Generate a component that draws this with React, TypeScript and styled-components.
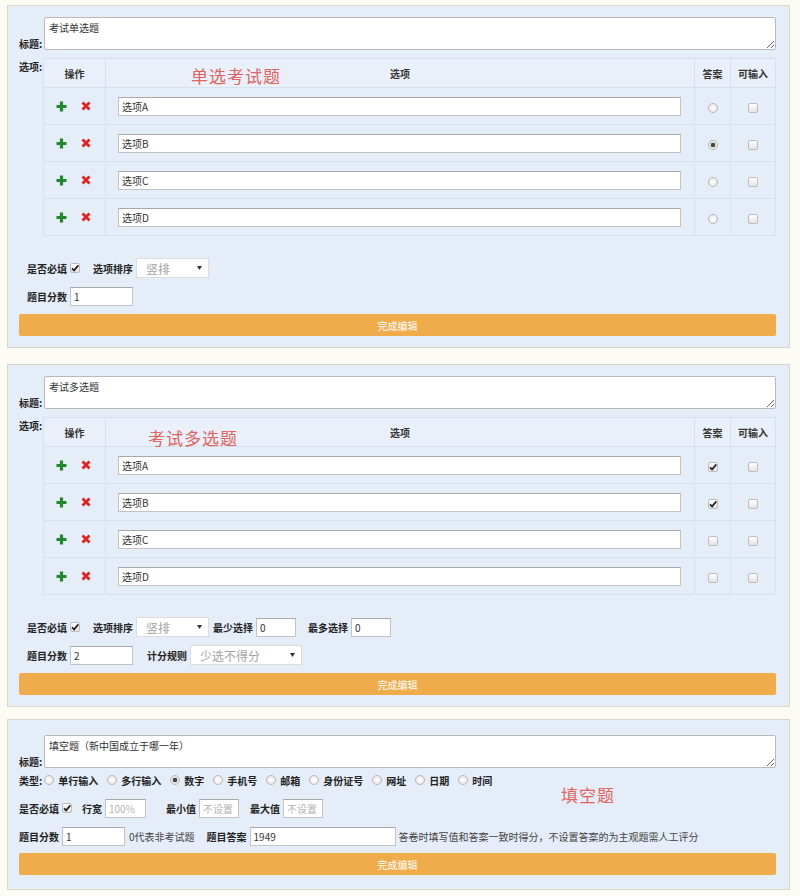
import React from 'react';
import styled, {createGlobalStyle} from 'styled-components';

const GlobalStyle = createGlobalStyle`
    body {
        margin: 0;
        background: #fcfcf4;
        font-family: "Noto Sans CJK SC", "Liberation Sans", sans-serif;
        font-size: 10px;
        color: #333;
    }
`;

const Page = styled.div`
    display: flex;
    flex-direction: column;
    padding: 5px 0 6px 7px;
`;

const Panel = styled.section<{ $mt?: number; $pt?: number; $pb?: number }>`
    position: relative;
    box-sizing: border-box;
    width: 783px;
    margin-top: ${p => p.$mt ?? 0}px;
    padding: ${p => p.$pt ?? 11}px 13px ${p => p.$pb ?? 11}px 11px;
    border: 1px solid #d6dac4;
    background: #e4edf8;
`;

const Note = styled.div<{ $left: number; $top: number }>`
    position: absolute;
    left: ${p => p.$left}px;
    top: ${p => p.$top}px;
    font-size: 17px;
    line-height: 20px;
    letter-spacing: 1px;
    color: #e4625f;
    pointer-events: none;
`;

const TitleRow = styled.div`
    display: flex;
    align-items: flex-end;
`;

const SideLabel = styled.label<{ $w: number; $pt?: number }>`
    width: ${p => p.$w}px;
    flex-shrink: 0;
    padding-top: ${p => p.$pt ?? 0}px;
    font-weight: bold;
    color: #222;
    line-height: 12px;
`;

const TitleArea = styled.textarea`
    flex: 1;
    box-sizing: border-box;
    height: 33px;
    padding: 2px 4px;
    border: 1px solid #b9b9b9;
    border-radius: 2px;
    background: #fff;
    font: inherit;
    color: #333;
`;

const OptionsRow = styled.div`
    display: flex;
    align-items: flex-start;
    margin-top: 8px;
`;

const Table = styled.table`
    flex: 1;
    border-collapse: collapse;
    table-layout: fixed;
`;

const Th = styled.th<{ $w?: number }>`
    width: ${p => (p.$w ? `${p.$w}px` : 'auto')};
    height: 28px;
    padding: 0;
    border: 1px solid #d6e1ee;
    background: #e9f0f9;
    font-weight: bold;
    color: #333;
    text-align: center;
`;

const Td = styled.td<{ $pad?: string }>`
    height: 36px;
    padding: ${p => p.$pad ?? '0'};
    border: 1px solid #d6e1ee;
    text-align: center;
    vertical-align: middle;
`;

const Ops = styled.div`
    display: flex;
    justify-content: center;
    gap: 14px;
    padding-right: 2px;
`;

const TextInput = styled.input<{ $w?: number }>`
    box-sizing: border-box;
    width: ${p => (p.$w ? `${p.$w}px` : '100%')};
    height: 19px;
    padding: 0 3px;
    border: 1px solid #c3c3c3;
    border-top-color: #a9a9a9;
    background: #fff;
    font: inherit;
    color: #333;

    &::placeholder {
        color: #b3b3b3;
    }
`;

const Radio = styled.input.attrs({type: 'radio'})`
    appearance: none;
    width: 10px;
    height: 10px;
    margin: 0;
    border: 1px solid #b8b8b8;
    border-radius: 50%;
    background: radial-gradient(circle, #fff 0, #e2e2e2 100%);
    vertical-align: middle;

    &:checked {
        background: radial-gradient(circle, #444 0 2px, #e8e8e8 2.6px);
    }
`;

const Check = styled.input.attrs({type: 'checkbox'})`
    appearance: none;
    width: 10px;
    height: 10px;
    margin: 0;
    border: 1px solid #bdbdbd;
    border-radius: 2px;
    background: linear-gradient(#fff, #e4e4e4);
    vertical-align: middle;

    &:checked {
        background: url("data:image/svg+xml;utf8,<svg xmlns='http://www.w3.org/2000/svg' viewBox='0 0 10 10'><path d='M2 5.3 L4.1 7.4 L8.3 2.4' fill='none' stroke='%23222' stroke-width='1.7'/></svg>") center / 10px 10px no-repeat,
            linear-gradient(#fff, #e4e4e4);
    }
`;

const Controls = styled.div<{ $ml: number; $mt: number }>`
    display: flex;
    flex-direction: column;
    gap: 8px;
    margin: ${p => p.$mt}px 0 0 ${p => p.$ml}px;
`;

const ControlRow = styled.div<{ $h?: number }>`
    display: flex;
    align-items: center;
    height: ${p => p.$h ?? 20}px;
`;

const Field = styled.span<{ $ml?: number; $gap?: number }>`
    display: inline-flex;
    align-items: center;
    gap: ${p => p.$gap ?? 3}px;
    margin-left: ${p => p.$ml ?? 0}px;
`;

const Bold = styled.span`
    font-weight: bold;
    color: #222;
    white-space: nowrap;
`;

const Plain = styled.span<{ $ml?: number }>`
    margin-left: ${p => p.$ml ?? 0}px;
    color: #444;
    white-space: nowrap;
`;

const Select = styled.select<{ $w: number }>`
    appearance: none;
    box-sizing: border-box;
    width: ${p => p.$w}px;
    height: 20px;
    padding: 0 0 0 9px;
    border: 1px solid #dcdcdc;
    background: #fff url("data:image/svg+xml;utf8,<svg xmlns='http://www.w3.org/2000/svg' viewBox='0 0 5 4'><path d='M0 0 L5 0 L2.5 4z' fill='%23333'/></svg>") right 6px center / 5px 4px no-repeat;
    font-family: inherit;
    font-size: 12px;
    color: #a3a3a3;
`;

const DoneButton = styled.button<{ $mt: number }>`
    display: block;
    width: 100%;
    height: 22px;
    margin-top: ${p => p.$mt}px;
    border: none;
    border-radius: 2px;
    background: #f0ac4b;
    color: #fff;
    font: inherit;
`;

const Plus = () => (
    <svg width="11" height="11" viewBox="0 0 11 11">
        <path d="M5.5 0.5 V10.5 M0.5 5.5 H10.5" stroke="#208a2a" strokeWidth="3.2"/>
    </svg>
);

const Cross = () => (
    <svg width="10" height="10" viewBox="0 0 10 10">
        <path d="M1.5 1.5 L8.5 8.5 M8.5 1.5 L1.5 8.5" stroke="#e3211f" strokeWidth="2.8"/>
    </svg>
);

type Kind = 'radio' | 'check';

const OptionTable: React.FC<{ kind: Kind; answers: boolean[]; name: string }> = ({kind, answers, name}) => (
    <Table>
        <thead>
        <tr>
            <Th $w={61}>操作</Th>
            <Th>选项</Th>
            <Th $w={35}>答案</Th>
            <Th $w={44}>可输入</Th>
        </tr>
        </thead>
        <tbody>
        {['A', 'B', 'C', 'D'].map((l, i) => (
            <tr key={l}>
                <Td>
                    <Ops><Plus/><Cross/></Ops>
                </Td>
                <Td $pad="0 13px 0 12px">
                    <TextInput defaultValue={`选项${l}`}/>
                </Td>
                <Td>
                    {kind === 'radio'
                        ? <Radio name={name} defaultChecked={answers[i]}/>
                        : <Check defaultChecked={answers[i]}/>}
                </Td>
                <Td><Check/></Td>
            </tr>
        ))}
        </tbody>
    </Table>
);

const types = ['单行输入', '多行输入', '数字', '手机号', '邮箱', '身份证号', '网址', '日期', '时间'];

const App: React.FC = () => (
    <Page>
        <GlobalStyle/>

        {/* 单选 */}
        <Panel>
            <Note $left={183} $top={60}>单选考试题</Note>
            <TitleRow>
                <SideLabel $w={25}>标题:</SideLabel>
                <TitleArea defaultValue="考试单选题"/>
            </TitleRow>
            <OptionsRow>
                <SideLabel $w={24} $pt={3}>选项:</SideLabel>
                <OptionTable kind="radio" name="single" answers={[false, true, false, false]}/>
            </OptionsRow>
            <Controls $ml={8} $mt={22}>
                <ControlRow>
                    <Field><Bold>是否必填</Bold><Check defaultChecked/></Field>
                    <Field $ml={13}><Bold>选项排序</Bold><Select $w={73}><option>竖排</option></Select></Field>
                </ControlRow>
                <ControlRow>
                    <Field><Bold>题目分数</Bold><TextInput $w={63} defaultValue="1"/></Field>
                </ControlRow>
            </Controls>
            <DoneButton $mt={8}>完成编辑</DoneButton>
        </Panel>

        {/* 多选 */}
        <Panel $mt={16}>
            <Note $left={140} $top={63}>考试多选题</Note>
            <TitleRow>
                <SideLabel $w={25}>标题:</SideLabel>
                <TitleArea defaultValue="考试多选题"/>
            </TitleRow>
            <OptionsRow>
                <SideLabel $w={24} $pt={3}>选项:</SideLabel>
                <OptionTable kind="check" name="multi" answers={[true, true, false, false]}/>
            </OptionsRow>
            <Controls $ml={8} $mt={22}>
                <ControlRow>
                    <Field><Bold>是否必填</Bold><Check defaultChecked/></Field>
                    <Field $ml={13}><Bold>选项排序</Bold><Select $w={73}><option>竖排</option></Select></Field>
                    <Field $ml={4}><Bold>最少选择</Bold><TextInput $w={40} defaultValue="0"/></Field>
                    <Field $ml={12}><Bold>最多选择</Bold><TextInput $w={40} defaultValue="0"/></Field>
                </ControlRow>
                <ControlRow>
                    <Field><Bold>题目分数</Bold><TextInput $w={63} defaultValue="2"/></Field>
                    <Field $ml={14}><Bold>计分规则</Bold><Select $w={112}><option>少选不得分</option></Select></Field>
                </ControlRow>
            </Controls>
            <DoneButton $mt={8}>完成编辑</DoneButton>
        </Panel>

        {/* 填空 */}
        <Panel $mt={12} $pt={15} $pb={14}>
            <Note $left={553} $top={65}>填空题</Note>
            <TitleRow>
                <SideLabel $w={25}>标题:</SideLabel>
                <TitleArea defaultValue="填空题（新中国成立于哪一年）"/>
            </TitleRow>
            <Controls $ml={0} $mt={4}>
                <ControlRow $h={16}>
                    <Bold>类型:</Bold>
                    {types.map((t, i) => (
                        <Field key={t} $ml={i === 0 ? 2 : 9} $gap={4}>
                            <Radio name="type" defaultChecked={t === '数字'}/>
                            <Bold>{t}</Bold>
                        </Field>
                    ))}
                </ControlRow>
            </Controls>
            <Controls $ml={0} $mt={10}>
                <ControlRow>
                    <Field><Bold>是否必填</Bold><Check defaultChecked/></Field>
                    <Field $ml={10}><Bold>行宽</Bold><TextInput $w={41} placeholder="100%"/></Field>
                    <Field $ml={20}><Bold>最小值</Bold><TextInput $w={40} placeholder="不设置"/></Field>
                    <Field $ml={11}><Bold>最大值</Bold><TextInput $w={40} placeholder="不设置"/></Field>
                </ControlRow>
                <ControlRow>
                    <Field><Bold>题目分数</Bold><TextInput $w={63} defaultValue="1"/></Field>
                    <Plain $ml={4}>0代表非考试题</Plain>
                    <Field $ml={12}><Bold>题目答案</Bold><TextInput $w={146} defaultValue="1949"/></Field>
                    <Plain $ml={3}>答卷时填写值和答案一致时得分，不设置答案的为主观题需人工评分</Plain>
                </ControlRow>
            </Controls>
            <DoneButton $mt={7}>完成编辑</DoneButton>
        </Panel>
    </Page>
);

export default App;
